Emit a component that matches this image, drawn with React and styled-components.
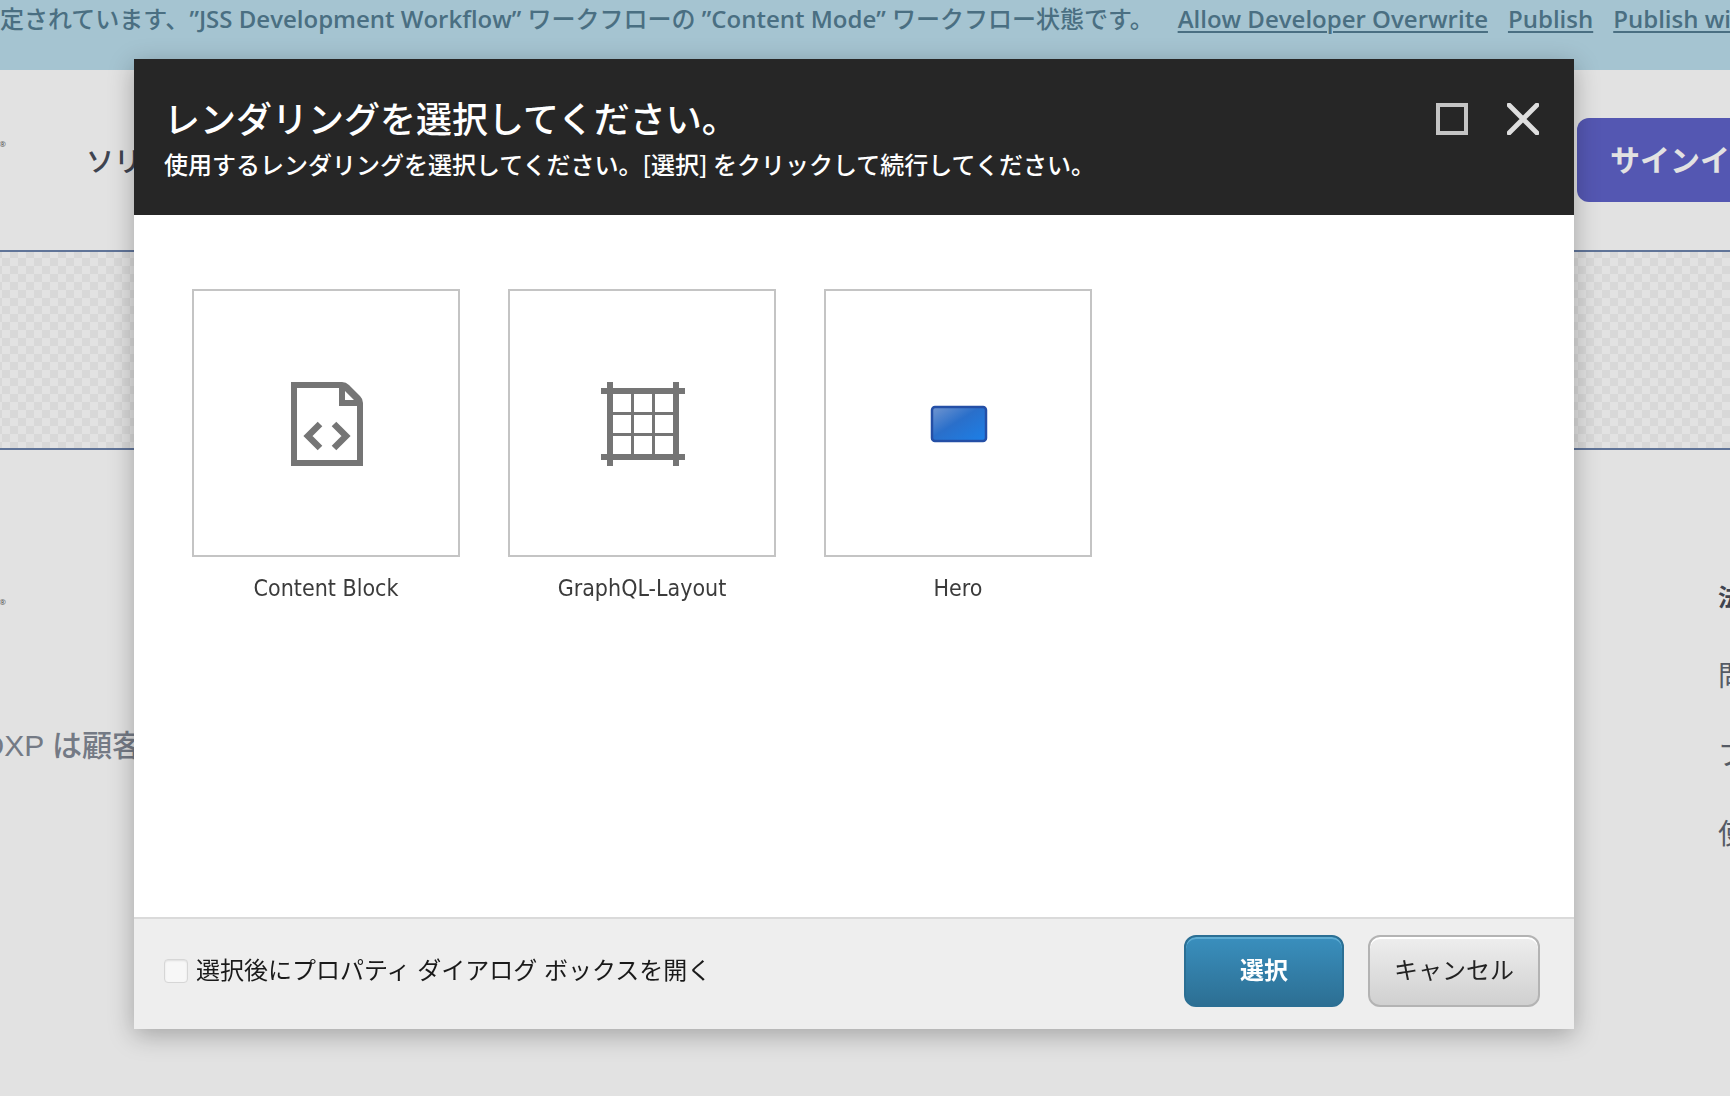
import React from "react";
import styled, { createGlobalStyle, css } from "styled-components";

const GlobalStyle = createGlobalStyle`
  *, *::before, *::after { box-sizing: border-box; }
  body {
    margin: 0;
    background: #e2e2e2;
    font-family: "Open Sans", "Noto Sans CJK JP", sans-serif;
    font-size: 24px;
    line-height: 32px;
    overflow: hidden;
    text-spacing-trim: space-all;
  }
  h1, p { margin: 0; }
  button { font: inherit; cursor: pointer; }
`;

const Page = styled.div`
  min-height: 100vh;
  overflow: hidden;
  white-space: nowrap;
`;

const WorkflowBar = styled.div`
  display: flex;
  gap: 20px;
  height: 70px;
  padding-top: 3px;
  background: #a5c4d1;
  color: #4a6f82;
  font-weight: 600;
`;

const WorkflowText = styled.span`
  margin-right: 4px;
  font-weight: 500;
`;

const WorkflowName = styled.span`
  font-weight: 600;
`;

const WorkflowLink = styled.a`
  color: inherit;
  text-decoration: underline;
  text-decoration-thickness: 2px;
  text-underline-offset: 3px;
`;

const SiteHeader = styled.header`
  display: flex;
  align-items: center;
  justify-content: space-between;
  height: 180px;
`;

const SiteNav = styled.nav`
  display: flex;
  align-items: center;
  gap: 80px;
`;

const Mark = styled.span`
  width: 6px;
  display: flex;
  justify-content: flex-end;
  font-size: 8px;
  line-height: 8px;
  padding-bottom: ${(p) => (p.$raised ? "32px" : "0")};
  color: #4d4d4d;
`;

const NavLink = styled.a`
  padding-top: 2px;
  color: #3f4450;
  text-decoration: none;
  font-size: 28px;
  font-weight: 500;
`;

const SignIn = styled.button`
  width: 153px;
  height: 84px;
  padding: 0 0 0 33px;
  border: 0;
  border-radius: 12px 0 0 12px;
  background: #5457b2;
  color: #e2e2e2;
  font-size: 30px;
  font-weight: 700;
  text-align: left;
  overflow: hidden;
`;

const Placeholder = styled.div`
  height: 200px;
  border-top: 2px solid #607498;
  border-bottom: 2px solid #607498;
  background: repeating-conic-gradient(#d8d8d8 0 25%, #e2e2e2 0 50%) 2px 0 / 16px 16px border-box;
`;

const SiteFooter = styled.footer`
  display: flex;
  justify-content: space-between;
  align-items: flex-start;
  padding-top: 127px;
`;

const FooterAbout = styled.div`
  display: flex;
  flex-direction: column;
  gap: 118px;
  padding-top: 21px;
`;

const AboutText = styled.p`
  display: flex;
  justify-content: flex-end;
  width: 142px;
  overflow: hidden;
  color: #747a85;
  font-family: "Liberation Sans", "Noto Sans CJK JP", sans-serif;
  font-size: 30px;
  font-weight: 500;
  line-height: 44px;
`;

const FooterLinks = styled.nav`
  display: flex;
  flex-direction: column;
  gap: 40px;
  width: 12px;
  overflow: hidden;
`;

const FooterLink = styled.a`
  color: ${(p) => (p.$heading ? "#3f4450" : "#555b66")};
  font-size: ${(p) => (p.$heading ? "24px" : "28px")};
  font-weight: ${(p) => (p.$heading ? 700 : 400)};
  line-height: 39px;
  text-decoration: none;
`;

const Overlay = styled.div`
  position: fixed;
  inset: 0;
  display: flex;
  align-items: flex-start;
  padding: 59px 156px 67px 134px;
`;

const Dialog = styled.section`
  flex: 1;
  align-self: stretch;
  display: flex;
  flex-direction: column;
  background: #fff;
  box-shadow: 0 6px 24px rgba(0, 0, 0, 0.28);
`;

const DialogHeader = styled.header`
  display: flex;
  justify-content: space-between;
  align-items: flex-start;
  padding: 34px 35px 28px 30px;
  background: #262626;
  color: #fff;
`;

const DialogTitle = styled.h1`
  font-size: 36px;
  font-weight: 500;
  line-height: 48px;
  font-family: "Noto Sans CJK JP", sans-serif;
`;

const DialogHint = styled.p`
  font-family: "Noto Sans CJK JP", sans-serif;
  font-weight: 500;
  line-height: 46px;
`;

const WindowControls = styled.div`
  display: flex;
  gap: 39px;
  padding-top: 10px;
`;

const WindowButton = styled.button`
  display: flex;
  padding: 0;
  border: 0;
  background: none;
`;

const DialogBody = styled.div`
  flex: 1;
  display: flex;
  align-items: flex-start;
  gap: 48px;
  padding: 74px 58px;
`;

const Rendering = styled.button`
  display: flex;
  flex-direction: column;
  gap: 16px;
  width: 268px;
  padding: 0;
  border: 0;
  background: none;
  color: #3b3b3b;
  font-family: "DejaVu Sans Condensed", "DejaVu Sans", sans-serif;
  font-size: 23px;
  line-height: 30px;
`;

const Thumb = styled.span`
  display: flex;
  align-items: center;
  justify-content: center;
  width: 100%;
  aspect-ratio: 1;
  border: 2px solid #c4c4c4;
`;

const Caption = styled.span`
  width: 100%;
  text-align: center;
`;

const DialogFooter = styled.footer`
  display: flex;
  align-items: center;
  justify-content: space-between;
  padding: 16px 34px 22px 30px;
  border-top: 2px solid #dadada;
  background: #eee;
`;

const OptionLabel = styled.label`
  display: flex;
  align-items: center;
  gap: 8px;
  color: #1a1a1a;
  font-family: "Liberation Sans", "Noto Sans CJK JP", sans-serif;
  line-height: 34px;
`;

const Checkbox = styled.input`
  appearance: none;
  width: 24px;
  height: 24px;
  margin: 0;
  border: 1px solid #d6d6d6;
  border-radius: 4px;
  background: #f7f7f7;
  box-shadow: inset 0 1px 2px rgba(0, 0, 0, 0.1);
`;

const Actions = styled.div`
  display: flex;
  gap: 24px;
`;

const ActionButton = styled.button`
  height: 72px;
  padding: 0 24px 4px;
  border: 2px solid #b3b3b3;
  border-radius: 12px;
  background: linear-gradient(#eeeeee, #d0d0d0);
  box-shadow: inset 0 2px 0 #fff;
  color: #222;
  font-family: "Noto Sans CJK JP", sans-serif;
  ${(p) =>
    p.$primary &&
    css`
      min-width: 160px;
      border-color: #2b6f94;
      background: linear-gradient(#3a90bf, #2c6e92) border-box;
      box-shadow: inset 0 2px 0 #5fadd3;
      color: #fff;
      font-weight: 700;
    `}
`;

const MaximizeIcon = () => (
  <svg width="32" height="32" viewBox="0 0 32 32" fill="none" aria-hidden="true">
    <rect x="2" y="2" width="28" height="28" stroke="#c4c4c4" strokeWidth="4" />
  </svg>
);

const CloseIcon = () => (
  <svg width="32" height="32" viewBox="0 0 32 32" fill="none" aria-hidden="true">
    <path d="M2 2L30 30M30 2L2 30" stroke="#dedede" strokeWidth="4.8" strokeLinecap="round" />
  </svg>
);

const CodeFileIcon = () => (
  <svg width="96" height="96" viewBox="0 0 96 96" fill="none" aria-hidden="true">
    <path
      fill="#757575"
      fillRule="evenodd"
      d="M13 7H64Q68 7 71 10L82 21Q85 24 85 28V91H13ZM19 13V85H79V31H61V13ZM67 16V25H76Z"
    />
    <path d="M42 49L30 61L42 73M56 49L68 61L56 73" stroke="#757575" strokeWidth="6.5" />
  </svg>
);

const GridIcon = () => (
  <svg width="96" height="96" viewBox="0 0 96 96" fill="none" stroke="#757575" aria-hidden="true">
    <path d="M16 7V91M82 7V91M7 16H91M7 82H91" strokeWidth="6" />
    <path d="M38.5 16V82M59.5 16V82M16 38.5H82M16 59.5H82" strokeWidth="3" />
  </svg>
);

const HeroIcon = () => (
  <svg width="96" height="96" viewBox="0 0 96 96" aria-hidden="true">
    <defs>
      <linearGradient id="heroFill" x1="0" y1="0" x2="1" y2="1">
        <stop offset="0" stopColor="#7296d0" />
        <stop offset="0.45" stopColor="#2a6fca" />
        <stop offset="1" stopColor="#1c80e8" />
      </linearGradient>
    </defs>
    <rect x="22" y="32" width="54" height="34" rx="3" fill="url(#heroFill)" stroke="#244fa6" strokeWidth="2.5" />
  </svg>
);

const renderings = [
  { name: "Content Block", Icon: CodeFileIcon },
  { name: "GraphQL-Layout", Icon: GridIcon },
  { name: "Hero", Icon: HeroIcon },
];

export default function App() {
  return (
    <>
      <GlobalStyle />
      <Page>
        <WorkflowBar>
          <WorkflowText>
            定されています、<WorkflowName>”JSS Development Workflow”</WorkflowName> ワークフローの{" "}
            <WorkflowName>”Content Mode”</WorkflowName> ワークフロー状態です。
          </WorkflowText>
          <WorkflowLink href="#overwrite">Allow Developer Overwrite</WorkflowLink>
          <WorkflowLink href="#publish">Publish</WorkflowLink>
          <WorkflowLink href="#publish-with">Publish wi</WorkflowLink>
        </WorkflowBar>
        <SiteHeader>
          <SiteNav>
            <Mark $raised>®</Mark>
            <NavLink href="#solutions">ソリ</NavLink>
          </SiteNav>
          <SignIn type="button">サインイ</SignIn>
        </SiteHeader>
        <Placeholder />
        <SiteFooter>
          <FooterAbout>
            <Mark>®</Mark>
            <AboutText>DXP は顧客</AboutText>
          </FooterAbout>
          <FooterLinks>
            <FooterLink href="#legal" $heading>法</FooterLink>
            <FooterLink href="#contact">問</FooterLink>
            <FooterLink href="#privacy">プ</FooterLink>
            <FooterLink href="#terms">使</FooterLink>
          </FooterLinks>
        </SiteFooter>
      </Page>
      <Overlay>
        <Dialog role="dialog" aria-labelledby="dialog-title">
          <DialogHeader>
            <div>
              <DialogTitle id="dialog-title">レンダリングを選択してください。</DialogTitle>
              <DialogHint>使用するレンダリングを選択してください。[選択] をクリックして続行してください。</DialogHint>
            </div>
            <WindowControls>
              <WindowButton type="button" aria-label="最大化"><MaximizeIcon /></WindowButton>
              <WindowButton type="button" aria-label="閉じる"><CloseIcon /></WindowButton>
            </WindowControls>
          </DialogHeader>
          <DialogBody>
            {renderings.map(({ name, Icon }) => (
              <Rendering type="button" key={name}>
                <Thumb><Icon /></Thumb>
                <Caption>{name}</Caption>
              </Rendering>
            ))}
          </DialogBody>
          <DialogFooter>
            <OptionLabel>
              <Checkbox type="checkbox" />
              選択後にプロパティ ダイアログ ボックスを開く
            </OptionLabel>
            <Actions>
              <ActionButton type="button" $primary>選択</ActionButton>
              <ActionButton type="button">キャンセル</ActionButton>
            </Actions>
          </DialogFooter>
        </Dialog>
      </Overlay>
    </>
  );
}
